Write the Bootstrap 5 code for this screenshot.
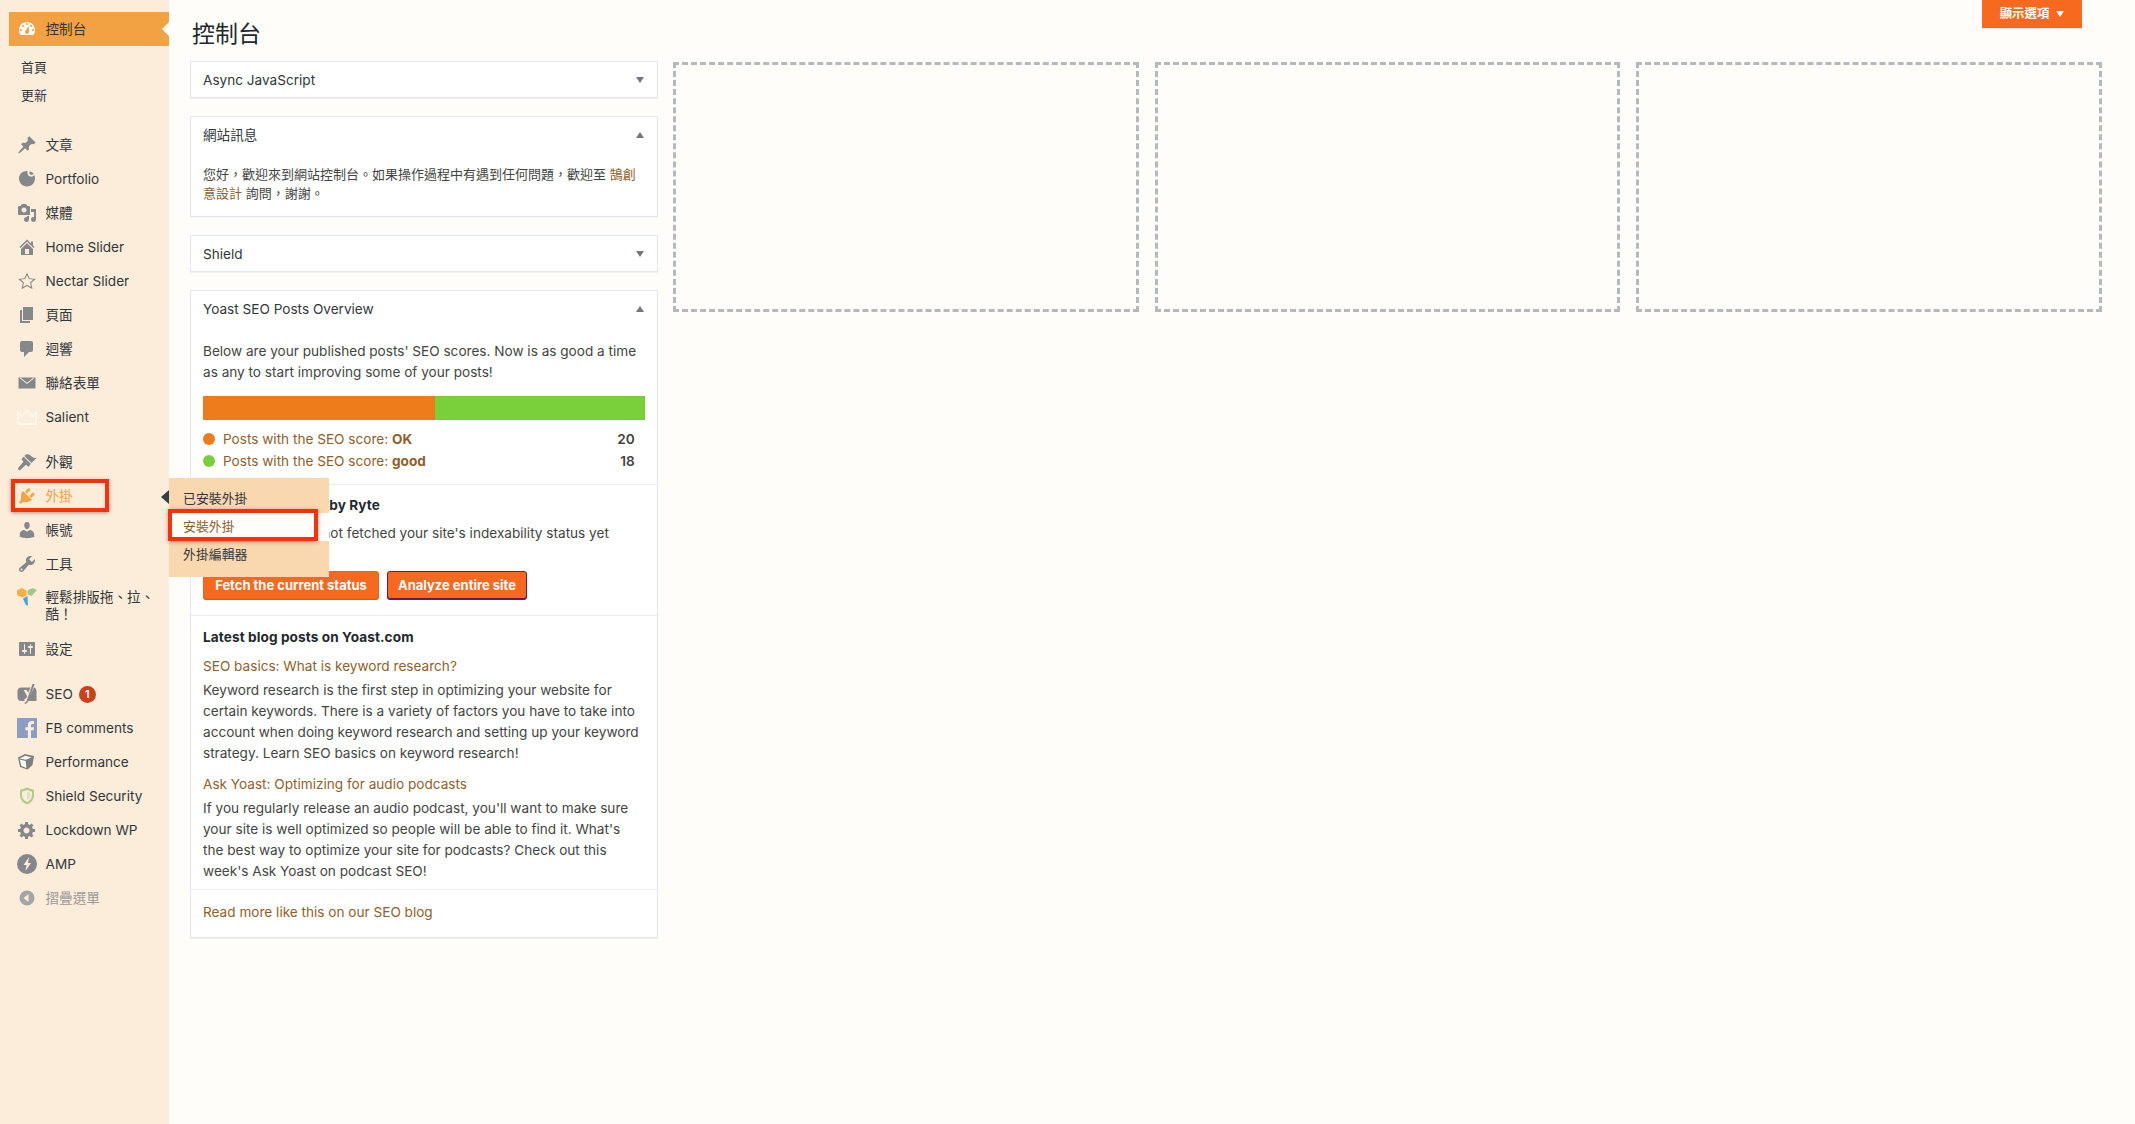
<!DOCTYPE html>
<html lang="zh-Hant">
<head>
    <meta charset="UTF-8">
    <meta name="viewport" content="width=device-width, initial-scale=1.0">
    <title>控制台</title>
    <link href="https://cdn.jsdelivr.net/npm/bootstrap@5.3.2/dist/css/bootstrap.min.css" rel="stylesheet">
    <style>
        body {
            background: #fefdfa;
            color: #444;
            font-family: "Inter", "Noto Sans CJK TC", sans-serif;
            font-size: 13.6px;
            line-height: 21px;
        }
        .pagina { min-height: 1124px; }

        /* menu lateral */
        .lateral { width: 169px; flex: none; background: #fcecda; padding-top: 12px; }
        .lateral a { color: #32373c; text-decoration: none; }
        .fila-menu { display: flex; align-items: center; height: 34px; padding-left: 17px; position: relative; }
        .fila-menu svg { width: 20px; height: 20px; flex: none; margin-right: 8.5px; fill: #85878a; }
        .fila-doble { height: 51px; align-items: flex-start; padding-top: 8px; line-height: 17px; }
        .fila-doble svg { margin-top: -2px; }
        .fila-activa { margin-left: 9px; padding-left: 8px; background: #f2a243; color: #333; }
        .fila-activa svg { fill: #fff; }
        .fila-activa::after {
            content: ""; position: absolute; right: 0; top: 10px;
            border: 7px solid transparent; border-right-color: #fefdfa; border-left-width: 0;
        }
        .sub-menu { padding: 7px 0 18px 21px; font-size: 12.9px; }
        .sub-menu a { display: block; height: 28px; line-height: 28px; }
        .sub-menu a:first-child { margin-top: 1px; }
        .grupo { margin-bottom: 11px; }
        .texto-naranja, .lateral a.texto-naranja { color: #f2a243; }
        .texto-naranja svg { fill: #f2a243; }
        .texto-gris, .lateral a.texto-gris { color: #9b9b9b; }
        .globo {
            width: 17px; height: 17px; border-radius: 50%; background: #c8421b; color: #fff;
            font-size: 11px; font-weight: 600; line-height: 17px; text-align: center; margin-left: 6px;
        }
        .marco-rojo {
            position: absolute; border: 4px solid #fb3008; box-shadow: 0 1px 4px rgba(0, 0, 0, .35);
            pointer-events: none;
        }
        .marco-plugin { left: 11px; top: 0; width: 98px; height: 33px; }

        /* menu flotante */
        .flotante {
            position: absolute; left: 169px; top: 478px; width: 160px; height: 99px;
            background: #f9d8b0; padding-top: 7px; font-size: 12.9px; z-index: 5;
        }
        .flotante::before {
            content: ""; position: absolute; left: -8px; top: 12px;
            border: 7px solid transparent; border-right-color: #2f4143; border-left-width: 0; border-right-width: 8px;
        }
        .flotante a { display: block; height: 28px; line-height: 28px; padding-left: 14px; color: #32373c; text-decoration: none; }
        .flotante a.sub-actual { background: #fefdfa; color: #8f5f2b; }
        .marco-sub { left: -1px; top: 31px; width: 150px; height: 32px; }

        /* contenido */
        .contenido { flex: 1 1 auto; padding: 0 33px 0 21px; min-width: 0; }
        .cabecera { height: 61px; }
        .titulo-pag {
            font-size: 23px; font-weight: 400; color: #23282d; margin: 17px 0 0 2px; line-height: 34px;
        }
        .boton-opciones {
            width: 100px; height: 28px; margin-right: 20px; background: #f7691f; color: #fff;
            border: 0; border-radius: 0; font-size: 12.4px; font-weight: 600; line-height: 28px; padding: 0;
            box-shadow: 0 1px 1px rgba(0, 0, 0, .08);
        }
        .flecha-abajo, .flecha-arriba { display: inline-block; border: 4.5px solid transparent; border-bottom-width: 0; border-top: 6px solid #72777c; }
        .flecha-arriba { border-top-width: 0; border-bottom: 6px solid #72777c; border-left-width: 4.5px; }
        .boton-opciones .flecha-abajo { border-top-color: #fff; margin-left: 7px; vertical-align: 1px; }
        .columnas { --bs-gutter-x: 15px; }
        .caja {
            background: #fff; border: 1px solid #e2e6ee; box-shadow: 0 1px 1px rgba(0, 0, 0, .04);
            margin-bottom: 18px; margin-right: -1px;
        }
        .caja-titulo { display: flex; justify-content: space-between; align-items: center; height: 35px; padding: 1px 13px 0 12px; color: #32373c; }
        .caja-cuerpo { padding: 0 12px; }
        .caja a, .enlace { color: #8f5f2b; text-decoration: none; }
        .cuerpo-sitio { padding: 13px 12px 13px; font-size: 13px; line-height: 19px; }
        .cuerpo-yoast { padding-top: 15px; }
        .hueco { height: 250px; margin: 1px 0 0 1px; border: 3px dashed #b4b9be; }
        .barra { height: 24px; margin-top: 13px; }
        .barra-ok { background: #ee7c1b; }
        .barra-bien { background: #7ad03a; }
        .barra-na { background: #888; }
        .punto { width: 12px; height: 12px; border-radius: 50%; margin-right: 8px; flex: none; }
        .punto-en-linea { display: inline-block; margin-right: 10px; }
        .fila-puntos { height: 22px; color: #8f5f2b; }
        .cifra { font-weight: 600; color: #444; margin-right: 10px; }
        .puntos { padding: 8px 0 12px; }
        .bloque { border-top: 1px solid #eee; padding: 10px 12px 0; }
        .btn-naranja {
            background: #f7691f; color: #fff; font-size: 13px; font-weight: 700; height: 28px; padding: 0;
            border: 1px solid #f06215; border-radius: 3px; box-shadow: 0 1px 0 #e05a12; line-height: 26px;
        }
        .btn-uno { width: 176px; }
        .btn-dos { width: 140px; border-color: #6f1a4d; box-shadow: 0 1px 0 #6f1a4d; }
        .negrita { font-weight: 700; color: #23282d; letter-spacing: .1px; }
        .parrafo { margin: 3px 0 10px; max-width: 437px; }
        .parrafo-fin { margin-bottom: 7px; }
        .bloque-ryte { padding-bottom: 16px; }
        .bloque-ultimo { padding-top: 11px; }
        .texto-ryte { margin: 7px 0 6px; }
        .bloque-fin { padding: 12px 12px 14px; }
    </style>
</head>
<body>
<div class="pagina d-flex position-relative">
    <nav class="lateral">
        <a class="fila-menu fila-activa" href="#"><svg viewBox="0 0 20 20"><path d="M3.76 16h12.48c1.1-1.37 1.76-3.11 1.76-5 0-4.42-3.58-8-8-8s-8 3.58-8 8c0 1.89.66 3.63 1.76 5zM10 4c.55 0 1 .45 1 1s-.45 1-1 1-1-.45-1-1 .45-1 1-1zM6 6c.55 0 1 .45 1 1s-.45 1-1 1-1-.45-1-1 .45-1 1-1zm8 0c.55 0 1 .45 1 1s-.45 1-1 1-1-.45-1-1 .45-1 1-1zm-5.37 5.55L12 7v6c0 1.1-.9 2-2 2s-2-.9-2-2c0-.57.24-1.08.63-1.45zM4 10c.55 0 1 .45 1 1s-.45 1-1 1-1-.45-1-1 .45-1 1-1zm12 0c.55 0 1 .45 1 1s-.45 1-1 1-1-.45-1-1 .45-1 1-1z" fill-rule="evenodd"/></svg>控制台</a>
        <div class="sub-menu">
            <a href="#">首頁</a>
            <a href="#">更新</a>
        </div>
        <div class="grupo">
            <a class="fila-menu" href="#"><svg viewBox="0 0 20 20"><path d="M10.44 3.02l1.82-1.82 6.36 6.35-1.83 1.82c-1.05-.68-2.48-.57-3.41.36l-.75.75c-.92.93-1.04 2.35-.35 3.41l-1.83 1.82-2.41-2.41-2.8 2.79c-.42.42-3.38 2.71-3.8 2.29s1.86-3.39 2.28-3.81l2.79-2.79L4.1 9.36l1.83-1.82c1.05.69 2.48.57 3.4-.36l.75-.75c.93-.92 1.05-2.35.36-3.41z"/></svg>文章</a>
            <a class="fila-menu" href="#"><svg viewBox="0 0 20 20"><path d="M10.500 2.600C9.900 4.800 11 6.900 13 7.500c1.700.5 3.300-.2 4.300-1.500.5 1.100.7 2.300.7 3.500 0 4.400-3.600 8-8 8s-8-3.600-8-8 3.600-7.600 8.500-7.400zM12.500 2.400c1.800.3 3.300 1.100 4.200 2.400-.7.9-1.900 1.300-3 .9-1.200-.5-1.700-2-1.200-3.300z"/></svg>Portfolio</a>
            <a class="fila-menu" href="#"><svg viewBox="0 0 20 20"><path d="M13 11V4c0-.55-.45-1-1-1h-1.670L9 1H5L3.670 3H2c-.55 0-1 .45-1 1v7c0 .55.45 1 1 1h10c.55 0 1-.45 1-1zM7 4.500c1.380 0 2.500 1.120 2.500 2.500S8.380 9.500 7 9.500 4.500 8.380 4.500 7 5.620 4.500 7 4.500zM14 6h5v10.500c0 1.380-1.120 2.500-2.500 2.500S14 17.880 14 16.500s1.120-2.500 2.500-2.500c.17 0 .34.02.5.05V9h-3V6zm-4 8.050V13h2v3.500c0 1.380-1.120 2.500-2.500 2.500S7 17.880 7 16.500 8.120 14 9.500 14c.17 0 .34.02.5.05z"/></svg>媒體</a>
            <a class="fila-menu" href="#"><svg viewBox="0 0 20 20"><path d="M16 8.500l1.530 1.530-1.060 1.060L10 4.620l-6.470 6.470-1.060-1.060L10 2.500l4 4v-2h2v4zm-6-2.460l6 5.990V18H4v-5.970zM12 17v-5H8v5h4z"/></svg>Home Slider</a>
            <a class="fila-menu" href="#"><svg viewBox="0 0 20 20"><path d="M10 1.500l2.600 5.700 6.200.7-4.600 4.200 1.300 6.100L10 15.100l-5.500 3.100 1.300-6.100L1.200 7.900l6.200-.7zm0 2.500L8.100 8.100l-4.500.5 3.300 3-.9 4.400 4-2.200 4 2.200-.9-4.400 3.300-3-4.500-.5z" fill-rule="evenodd"/></svg>Nectar Slider</a>
            <a class="fila-menu" href="#"><svg viewBox="0 0 20 20"><path d="M6 15V2h10v13H6zm-1 1h8v2H3V5h2v11z"/></svg>頁面</a>
            <a class="fila-menu" href="#"><svg viewBox="0 0 20 20"><path d="M5 2h9c1.100 0 2 .9 2 2v7c0 1.100-.9 2-2 2h-2l-5 5v-5H5c-1.100 0-2-.9-2-2V4c0-1.100.9-2 2-2z"/></svg>迴響</a>
            <a class="fila-menu" href="#"><svg viewBox="0 0 20 20"><path d="M1.500 4.500h17v11h-17zM2.800 5.300l7.200 5.800 7.200-5.800-.8-.6-6.400 5.100-6.400-5.100z" fill-rule="evenodd"/></svg>聯絡表單</a>
            <a class="fila-menu" href="#"><svg viewBox="0 0 20 20" style="fill:#fdf7ee"><path d="M0 3l5 5 5-6 5 6 5-5v15H0zm2 5v8h16V8l-3 3-5-6-5 6z" fill-rule="evenodd"/></svg>Salient</a>
        </div>
        <div class="grupo">
            <a class="fila-menu" href="#"><svg viewBox="0 0 20 20"><path d="M14.480 11.060L7.410 3.990l1.500-1.500c.5-.56 2.300-.47 3.510.32 1.210.8 1.430 1.280 2.910 2.100 1.180.64 2.450 1.260 4.450.85zm-.71.71L6.700 4.700 4.930 6.470c-.39.39-.39 1.020 0 1.410l1.060 1.060c.39.39.39 1.030 0 1.420L1.500 15.500c-.5.7-.5 1.600 0 2.200.6.600 1.500.600 2.200 0l4.600-4.500c.39-.39 1.020-.39 1.410 0l1.060 1.060c.39.39 1.020.39 1.410 0z"/></svg>外觀</a>
            <a class="fila-menu texto-naranja" href="#"><svg viewBox="0 0 20 20"><path d="M13.110 4.360L9.870 7.600 8 5.730l3.240-3.240c.35-.34 1.050-.2 1.560.32.52.51.66 1.210.31 1.550zm-8 1.770l.91-1.120 9.010 9.010-1.190.84c-.71.71-2.630 1.160-3.820 1.160H6.140L4.900 17.260c-.59.59-1.540.59-2.120 0-.59-.58-.59-1.530 0-2.120l1.240-1.240v-3.880c0-1.130.4-3.190 1.090-3.890zm7.260 3.970l3.240-3.240c.34-.35 1.040-.21 1.550.31.52.51.66 1.210.31 1.550l-3.240 3.250z"/></svg>外掛<span class="marco-rojo marco-plugin"></span></a>
            <a class="fila-menu" href="#"><svg viewBox="0 0 20 20"><path d="M10 9.250c-2.270 0-2.730-3.440-2.730-3.440C7 4.020 7.820 2 9.970 2c2.160 0 2.980 2.020 2.710 3.810 0 0-.41 3.440-2.680 3.440zm0 2.570L12.720 10c2.390 0 4.520 2.330 4.520 4.530v2.490s-3.650 1.130-7.240 1.130c-3.650 0-7.240-1.130-7.240-1.130v-2.490c0-2.250 1.940-4.480 4.470-4.480z"/></svg>帳號</a>
            <a class="fila-menu" href="#"><svg viewBox="0 0 20 20"><path d="M16.680 9.770c-1.340 1.340-3.300 1.670-4.950.99l-5.410 6.520c-.99.99-2.590.99-3.580 0s-.99-2.590 0-3.570l6.520-5.420c-.68-1.650-.35-3.610.99-4.950 1.280-1.280 3.120-1.620 4.720-1.060l-2.890 2.890 2.820 2.820 2.860-2.870c.53 1.580.18 3.390-1.080 4.650zM3.810 16.210c.4.39 1.040.39 1.430 0 .4-.4.4-1.040 0-1.430-.39-.4-1.030-.4-1.430 0-.39.39-.39 1.030 0 1.430z"/></svg>工具</a>
            <a class="fila-menu fila-doble" href="#"><svg viewBox="0 0 20 20"><path style="fill:#f5b03e" d="M0 3.500L4.500 1 9.500 3.500v5L5.500 10.500 0 8z"/><path style="fill:#9fc98a" d="M10.500 3.500L15.500 1 20 3l-5.500 6-4-1.500z"/><path style="fill:#4ba3d9" d="M6 11.500l4.500-2.500 .5 10-2.500-1.500z"/></svg><span>輕鬆排版拖、拉、酷！</span></a>
            <a class="fila-menu" href="#"><svg viewBox="0 0 20 20"><path d="M18 16V4c0-.55-.45-1-1-1H3c-.55 0-1 .45-1 1v12c0 .55.45 1 1 1h14c.55 0 1-.45 1-1zM8 11h1c.55 0 1 .45 1 1s-.45 1-1 1H8v1.500c0 .28-.22.5-.5.5s-.5-.22-.5-.5V13H6c-.55 0-1-.45-1-1s.45-1 1-1h1V5.500c0-.28.22-.5.5-.5s.5.22.5.5V11zm5-2h-1c-.55 0-1-.45-1-1s.45-1 1-1h1V5.500c0-.28.22-.5.5-.5s.5.22.5.5V7h1c.55 0 1 .45 1 1s-.45 1-1 1h-1v5.500c0 .28-.22.5-.5.5s-.5-.22-.5-.5V9z"/></svg>設定</a>
        </div>
        <div>
            <a class="fila-menu" href="#"><svg viewBox="0 0 20 20"><path d="M4 3.500h9.500l-2.300 5.300L9.700 6H6.800l3.300 6.200-.4 1.100c-.4 1-1.100 1.500-2.200 1.700V17H4c-1.900 0-3.500-1.600-3.500-3.500V7C.5 5.100 2.100 3.500 4 3.500zM17 3.500c1.500.5 2.500 1.900 2.500 3.500v10H10.300z"/><path d="M15.500 0h2.200L11 17.500c-.6 1.500-1.700 2.200-3.300 2.500v-1.500c.8-.2 1.500-.6 1.900-1.600l.2-.6z"/></svg>SEO<span class="globo">1</span></a>
            <a class="fila-menu" href="#"><svg viewBox="0 0 20 20" style="fill:#8b9dc3"><path d="M0 0h20v20H0zM14 20v-7.700h2.600l.4-3h-3V7.400c0-.9.300-1.500 1.500-1.500H17V3.200c-.300 0-1.200-.1-2.300-.1-2.300 0-3.800 1.400-3.800 3.900v2.300H8.300v3h2.600V20z" fill-rule="evenodd"/></svg>FB comments</a>
            <a class="fila-menu" href="#"><svg viewBox="0 0 20 20"><path d="M1 5.500L8 2l9 2-1.500 9-5 4.500L3 15z" style="fill:#7c7f82"/><path d="M2.500 6.500L8.500 3.800l6 1.800-5.500 2.200zM2.700 7.600l6 1.300.7 7-5-2z" style="fill:#fdf7ee"/></svg>Performance</a>
            <a class="fila-menu" href="#"><svg viewBox="0 0 20 20" style="fill:#b4c98a"><path d="M10 1.500l7 2.500v5c0 4.500-3 8-7 9.500C6 17 3 13.500 3 9V4zm0 2.500L5 5.800V9c0 3.200 2 5.800 5 7 3-1.200 5-3.800 5-7V5.800z" fill-rule="evenodd"/><path d="M10 5.800l3.500 1.200v2.500c0 2-1.500 3.800-3.500 4.500z" style="fill:#d9e3bd"/></svg>Shield Security</a>
            <a class="fila-menu" href="#"><svg viewBox="0 0 20 20"><path d="M18 12h-2.180c-.17.7-.44 1.350-.81 1.930l1.540 1.540-2.100 2.100-1.540-1.540c-.58.36-1.230.63-1.910.79V19H8v-2.180c-.68-.16-1.330-.43-1.910-.79l-1.540 1.540-2.120-2.120 1.540-1.540c-.36-.58-.63-1.230-.79-1.910H1V9.030h2.170c.16-.7.44-1.350.8-1.940L2.430 5.550l2.100-2.100 1.540 1.540c.58-.37 1.240-.64 1.930-.81V2h3v2.180c.68.16 1.330.43 1.910.79l1.540-1.540 2.120 2.120-1.540 1.540c.36.59.64 1.240.8 1.940H18V12zm-8.500 1.500c1.660 0 3-1.340 3-3s-1.340-3-3-3-3 1.340-3 3 1.340 3 3 3z"/></svg>Lockdown WP</a>
            <a class="fila-menu" href="#"><svg viewBox="0 0 20 20"><path d="M10 0a10 10 0 1 0 0 20 10 10 0 0 0 0-20zM8.500 17l1-6H6.500l5.500-8-1 6h3z" fill-rule="evenodd"/></svg>AMP</a>
            <a class="fila-menu texto-gris" href="#"><svg viewBox="0 0 20 20" style="fill:#a5a5a5"><path d="M10 2.500a7.500 7.500 0 1 0 0 15 7.500 7.500 0 0 0 0-15zM11.500 6v8l-5-4z" fill-rule="evenodd"/></svg>摺疊選單</a>
        </div>
    </nav>

    <div class="flotante">
        <a href="#">已安裝外掛</a>
        <a class="sub-actual" href="#">安裝外掛</a>
        <a href="#">外掛編輯器</a>
        <span class="marco-rojo marco-sub"></span>
    </div>

    <main class="contenido">
        <div class="cabecera d-flex justify-content-between align-items-start">
            <h1 class="titulo-pag">控制台</h1>
            <button class="boton-opciones" type="button">顯示選項<span class="flecha-abajo"></span></button>
        </div>
        <div class="row columnas">
            <div class="col-3">
                <section class="caja">
                    <div class="caja-titulo">Async JavaScript<span class="flecha-abajo"></span></div>
                </section>
                <section class="caja">
                    <div class="caja-titulo">網站訊息<span class="flecha-arriba"></span></div>
                    <div class="cuerpo-sitio">您好，歡迎來到網站控制台。如果操作過程中有遇到任何問題，歡迎至 <a href="#">鵠創</a><br><a href="#">意設計</a> 詢問，謝謝。</div>
                </section>
                <section class="caja">
                    <div class="caja-titulo">Shield<span class="flecha-abajo"></span></div>
                </section>
                <section class="caja">
                    <div class="caja-titulo">Yoast SEO Posts Overview<span class="flecha-arriba"></span></div>
                    <div class="caja-cuerpo cuerpo-yoast">
                        <div>Below are your published posts' SEO scores. Now is as good a time as any to start improving some of your posts!</div>
                        <div class="barra d-flex">
                            <div class="barra-ok" style="width: 52.6%"></div>
                            <div class="barra-bien" style="width: 47.4%"></div>
                        </div>
                        <div class="puntos">
                            <div class="fila-puntos d-flex align-items-center"><span class="punto barra-ok"></span><span class="flex-grow-1">Posts with the SEO score: <b class="fw-bold">OK</b></span><span class="cifra">20</span></div>
                            <div class="fila-puntos d-flex align-items-center"><span class="punto barra-bien"></span><span class="flex-grow-1">Posts with the SEO score: <b class="fw-bold">good</b></span><span class="cifra">18</span></div>
                        </div>
                    </div>
                    <div class="bloque bloque-ryte">
                        <div class="negrita">Indexability check by Ryte</div>
                        <div class="texto-ryte"><span class="punto punto-en-linea barra-na"></span>Yoast SEO has not fetched your site's indexability status yet<br>from Ryte</div>
                        <div class="d-flex gap-2">
                            <button class="btn-naranja btn-uno" type="button">Fetch the current status</button>
                            <button class="btn-naranja btn-dos" type="button">Analyze entire site</button>
                        </div>
                    </div>
                    <div class="bloque bloque-ultimo">
                        <div class="negrita">Latest blog posts on Yoast.com</div>
                        <div class="mt-2"><a href="#">SEO basics: What is keyword research?</a></div>
                        <p class="parrafo">Keyword research is the first step in optimizing your website for certain keywords. There is a variety of factors you have to take into account when doing keyword research and setting up your keyword strategy. Learn SEO basics on keyword research!</p>
                        <div><a href="#">Ask Yoast: Optimizing for audio podcasts</a></div>
                        <p class="parrafo parrafo-fin">If you regularly release an audio podcast, you'll want to make sure your site is well optimized so people will be able to find it. What's the best way to optimize your site for podcasts? Check out this week's Ask Yoast on podcast SEO!</p>
                    </div>
                    <div class="bloque bloque-fin"><a href="#">Read more like this on our SEO blog</a></div>
                </section>
            </div>
            <div class="col-3"><div class="hueco"></div></div>
            <div class="col-3"><div class="hueco"></div></div>
            <div class="col-3"><div class="hueco"></div></div>
        </div>
    </main>
</div>
<script src="https://cdn.jsdelivr.net/npm/bootstrap@5.3.2/dist/js/bootstrap.bundle.min.js"></script>
</body>
</html>
